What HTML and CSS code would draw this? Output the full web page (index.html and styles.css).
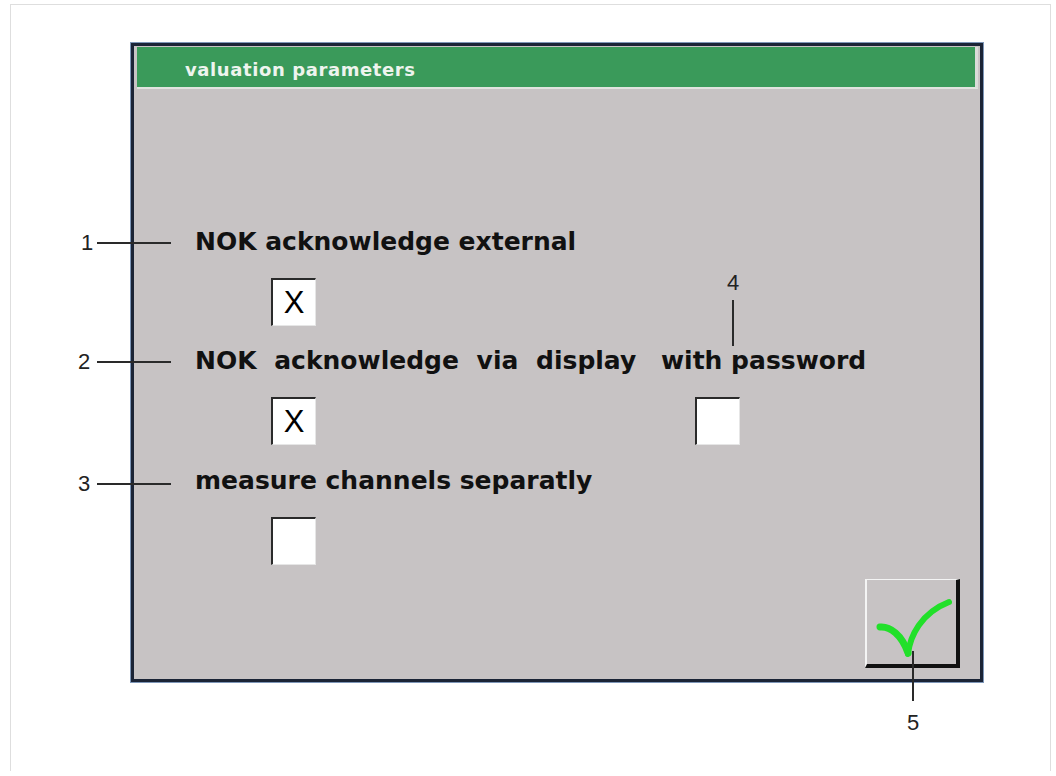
FILE: index.html
```html
<!DOCTYPE html>
<html>
<head>
  <meta charset="UTF-8">
  <title>valuation parameters</title>
  <link rel="stylesheet" href="styles.css">
</head>
<body>
  <div class="sheet">

    <div class="panel">
      <div class="titleBar">valuation parameters</div>

      <div class="panelBody">
        <div class="label">NOK acknowledge external</div>
        <div class="cell"><div class="checkBox">X</div></div>

        <div class="label wide">NOK acknowledge via display</div>
        <div class="label second">with password</div>
        <div class="cell"><div class="checkBox">X</div></div>
        <div class="cell second"><div class="checkBox"></div></div>

        <div class="label">measure channels separatly</div>
        <div class="cell"><div class="checkBox"></div></div>
      </div>

      <div class="panelFoot">
        <div class="okButton">
          <svg width="92" height="87" viewBox="0 0 92 87">
            <path d="M15 48 C25 47 37 56 43 74" fill="none" stroke="#22e02a" stroke-width="7" stroke-linecap="round"/>
            <path d="M43 75 C45 57 56 34 84 23" fill="none" stroke="#22e02a" stroke-width="6" stroke-linecap="round"/>
          </svg>
        </div>
      </div>
    </div>

    <!-- callouts -->
    <div class="callout num1">1</div>
    <div class="leader h l1"></div>
    <div class="callout num2">2</div>
    <div class="leader h l2"></div>
    <div class="callout num3">3</div>
    <div class="leader h l3"></div>
    <div class="callout num4">4</div>
    <div class="leader v l4"></div>
    <div class="callout num5">5</div>
    <div class="leader v l5"></div>

  </div>
</body>
</html>
```

FILE: styles.css
```css
  body {
    margin: 0px;
    background-color: #ffffff;
    font-family: "DejaVu Sans", Verdana, sans-serif;
  }
  .sheet {
    position: relative;
    margin: 4px 5px 0px 10px;
    height: 766px;
    border: 1px solid #dedede;
    border-bottom: none;
  }

  /* dialog */
  .panel {
    margin: 38px 0px 0px 120px;
    width: 846px;
    height: 633px;
    border: 3px solid #1b2436;
    box-shadow: 0px 0px 0px 1px #7d96b8;
    background-color: #c7c3c4;
    display: flex;
    flex-direction: column;
  }
  .titleBar {
    margin: 1px 2px 0px 3px;
    height: 40px;
    line-height: 46px;
    padding-left: 48px;
    background-color: #3a9a5a;
    border-right: 3px solid #d9dcd9;
    border-bottom: 2px solid #e0e4df;
    color: #eef4ee;
    font-weight: bold;
    font-size: 18px;
    letter-spacing: 0.6px;
    overflow: hidden;
  }
  .panelBody {
    flex: 1;
    padding: 141px 0px 0px 61px;
    display: grid;
    grid-template-columns: 466px 220px;
    grid-template-rows: 24px 95px 24px 96px 24px 60px;
    align-content: start;
  }
  .label {
    grid-column: 1;
    font-weight: bold;
    font-size: 25px;
    line-height: 24px;
    color: #111;
    white-space: nowrap;
  }
  .label.wide {
    word-spacing: 9px;
  }
  .label.second {
    grid-column: 2;
  }
  .cell {
    grid-column: 1;
    padding: 24px 0px 0px 76px;
  }
  .cell.second {
    grid-column: 2;
    padding-left: 34px;
  }
  .checkBox {
    box-sizing: border-box;
    width: 45px;
    height: 48px;
    background-color: #ffffff;
    border-top: 2px solid #2a2a2a;
    border-left: 2px solid #2a2a2a;
    border-right: 1px solid #e6e6e6;
    border-bottom: 1px solid #e6e6e6;
    font-family: "Liberation Sans", Arial, sans-serif;
    font-size: 31px;
    line-height: 46px;
    text-align: center;
    color: #000;
  }

  .panelFoot {
    display: flex;
    justify-content: flex-end;
    padding: 0px 20px 11px 0px;
  }
  .okButton {
    width: 89px;
    height: 84px;
    border-top: 1px solid #f4f4f4;
    border-left: 2px solid #f4f4f4;
    border-right: 4px solid #111;
    border-bottom: 4px solid #111;
    background-color: #c7c3c4;
  }
  .okButton svg {
    display: block;
    margin: -1px 0px 0px -2px;
  }

  /* callout numbers and leader lines */
  .callout {
    position: absolute;
    font-family: "Liberation Sans", Arial, sans-serif;
    font-size: 22px;
    line-height: 24px;
    color: #222;
  }
  .leader {
    position: absolute;
    background-color: #2a2a2a;
  }
  .leader.h {
    height: 2px;
    width: 74px;
    left: 86px;
  }
  .leader.v {
    width: 2px;
  }
  .num1 { left: 70px; top: 226px; }
  .l1 { top: 237px; }
  .num2 { left: 67px; top: 345px; }
  .l2 { top: 356px; }
  .num3 { left: 67px; top: 467px; }
  .l3 { top: 478px; }
  .num4 { left: 716px; top: 266px; }
  .l4 { left: 721px; top: 295px; height: 46px; }
  .num5 { left: 896px; top: 706px; }
  .l5 { left: 901px; top: 646px; height: 50px; }
```
